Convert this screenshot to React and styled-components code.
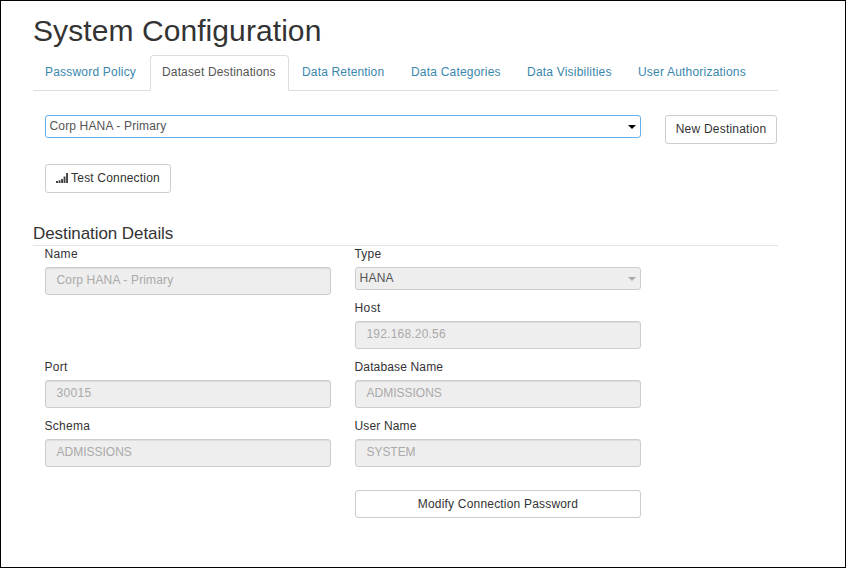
import React from 'react';
import styled, { createGlobalStyle, css } from 'styled-components';

const Global = createGlobalStyle`
  * { box-sizing: border-box; }
  body {
    margin: 0;
    background: #fff;
    color: #333;
    font: 12px/18px "Liberation Sans", Arial, sans-serif;
  }
`;

const Page = styled.main`
  width: 846px;
  height: 568px;
  border: 1px solid #000;
  padding: 10px 67px 0 32px;
  overflow: hidden;
`;

const Title = styled.h1`
  margin: 0;
  height: 44px;
  font-size: 30px;
  font-weight: 400;
  line-height: 40px;
  letter-spacing: 0.08px;
  white-space: nowrap;
`;

const Text = styled.span`
  display: inline-block;
  white-space: nowrap;
  letter-spacing: ${(p) => p.$ls || 0}px;
`;

const Tabs = styled.nav`
  display: flex;
  height: 36px;
  border-bottom: 1px solid #ddd;
`;

const Tab = styled.a`
  flex: none;
  width: ${(p) => p.$w}px;
  height: 36px;
  padding: 7px 0 0 11px;
  border: 1px solid transparent;
  border-radius: 4px 4px 0 0;
  color: #3a87ad;
  ${(p) => p.$active && css`
    margin-right: 1px;
    color: #555;
    background: #fff;
    border-color: #ddd #ddd #fff;
  `}
`;

const Toolbar = styled.div`
  display: flex;
  align-items: flex-start;
  justify-content: space-between;
  padding: 24px 1px 0 12px;
`;

const Button = styled.button`
  display: flex;
  align-items: center;
  justify-content: center;
  width: ${(p) => p.$w}px;
  height: ${(p) => p.$h || 29}px;
  padding: 0 0 1px;
  border: 1px solid #ccc;
  border-radius: 3px;
  background: #fff;
  color: #333;
  font: inherit;
  gap: 3px;
`;

const SelectBox = styled.div`
  display: flex;
  align-items: center;
  justify-content: space-between;
  width: ${(p) => p.$w}px;
  height: 23px;
  padding: 0 4px 2px 3.5px;
  border: 1px solid #66afe9;
  border-radius: 3px;
  color: #555;
  ${(p) => p.$disabled && css`
    border-color: #ccc;
    background: #eee;
  `}
`;

const Caret = styled.svg`
  display: block;
  width: 8px;
  height: 4px;
  margin-top: 3px;
  fill: ${(p) => p.$color};
`;

const TestRow = styled.div`
  padding: 20px 0 0 12px;
`;

const SignalIcon = styled.svg`
  display: block;
  width: 12px;
  height: 10px;
  fill: #444;
`;

const SectionHeading = styled.h2`
  margin: 29px 0 0;
  height: 24px;
  border-bottom: 1px solid #e5e5e5;
  font-size: 17px;
  font-weight: 400;
  line-height: 23px;
  white-space: nowrap;
`;

const Fields = styled.div`
  display: grid;
  grid-template-columns: 286px 286px;
  grid-template-rows: 54px 59px 59px 59px;
  column-gap: 24px;
  padding-left: 12px;
`;

const FieldBox = styled.div`
  grid-column: ${(p) => p.$col};
  grid-row: ${(p) => p.$row};
`;

const Label = styled.div`
  height: 21px;
  margin-left: -0.5px;
  line-height: 17px;
`;

const Input = styled.div`
  height: 28px;
  padding: 3px 10.5px;
  border: 1px solid #ccc;
  border-radius: 3px;
  background: #eee;
  box-shadow: inset 0 1px 1px rgba(0, 0, 0, 0.075);
  color: #aaa;
`;

const Footer = styled.div`
  display: flex;
  padding: 13px 0 0 322px;
`;

const tabs = [
  ['Password Policy', 117, 0.2],
  ['Dataset Destinations', 139, 0.15, true],
  ['Data Retention', 109, 0.16],
  ['Data Categories', 116, 0.2],
  ['Data Visibilities', 111, 0.21],
  ['User Authorizations', 130, 0.2],
];

const fields = [
  ['Name', 'Corp HANA - Primary', 1, 1, 0.35, 0.15],
  ['Host', '192.168.20.56', 2, 2, 0.4, 0.2],
  ['Port', '30015', 1, 3, 0.3, 0.3],
  ['Database Name', 'ADMISSIONS', 2, 3, 0.15, 0],
  ['Schema', 'ADMISSIONS', 1, 4, 0.28, 0],
  ['User Name', 'SYSTEM', 2, 4, 0.15, -0.05],
];

function Arrow({ color }) {
  return (
    <Caret viewBox="0 0 8 4" $color={color}>
      <path d="M0 0h8L4 4z" />
    </Caret>
  );
}

function Field({ label, value, col, row, labelLs, valueLs }) {
  return (
    <FieldBox $col={col} $row={row}>
      <Label><Text $ls={labelLs}>{label}</Text></Label>
      <Input><Text $ls={valueLs}>{value}</Text></Input>
    </FieldBox>
  );
}

export default function App() {
  return (
    <>
      <Global />
      <Page>
        <Title>System Configuration</Title>
        <Tabs>
          {tabs.map(([name, w, ls, active]) => (
            <Tab key={name} $w={w} $active={active}>
              <Text $ls={ls}>{name}</Text>
            </Tab>
          ))}
        </Tabs>
        <Toolbar>
          <SelectBox $w={596}>
            <Text $ls={0.15}>Corp HANA - Primary</Text>
            <Arrow color="#000" />
          </SelectBox>
          <Button $w={112}><Text $ls={0.22}>New Destination</Text></Button>
        </Toolbar>
        <TestRow>
          <Button $w={126}>
            <SignalIcon viewBox="0 0 12 10">
              <path d="M0 8h2v2H0zM2.600 7.300h1.900V10H2.600zM5.100 6h1.900v4H5.100zM7.600 3.500h1.900V10H7.600zM10.100 0H12v10h-1.900z" />
            </SignalIcon>
            <Text $ls={0.18}>Test Connection</Text>
          </Button>
        </TestRow>
        <SectionHeading><Text $ls={-0.08}>Destination Details</Text></SectionHeading>
        <Fields>
          {fields.map(([label, value, col, row, a, b]) => (
            <Field key={label} label={label} value={value} col={col} row={row} labelLs={a} valueLs={b} />
          ))}
          <FieldBox $col={2} $row={1}>
            <Label><Text $ls={0.2}>Type</Text></Label>
            <SelectBox $w={286} $disabled>
              <Text $ls={0.25}>HANA</Text>
              <Arrow color="#aaa" />
            </SelectBox>
          </FieldBox>
        </Fields>
        <Footer>
          <Button $w={286} $h={28}><Text $ls={0.19}>Modify Connection Password</Text></Button>
        </Footer>
      </Page>
    </>
  );
}
